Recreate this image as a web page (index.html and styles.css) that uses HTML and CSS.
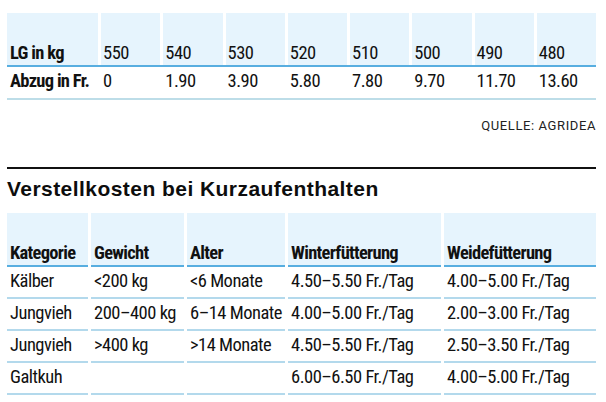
FILE: index.html
```html
<!DOCTYPE html>
<html lang="de">
<head>
<meta charset="utf-8">
<title>Verstellkosten</title>
<link rel="stylesheet" href="styles.css">
</head>
<body>
<main class="page">
  <section class="block">
    <div class="t1">
      <div class="t1-row t1-head">
        <div class="cell label">LG in kg</div>
        <div class="cell">550</div>
        <div class="cell">540</div>
        <div class="cell">530</div>
        <div class="cell">520</div>
        <div class="cell">510</div>
        <div class="cell">500</div>
        <div class="cell">490</div>
        <div class="cell">480</div>
      </div>
      <div class="t1-row t1-body">
        <div class="cell label">Abzug in Fr.</div>
        <div class="cell">0</div>
        <div class="cell">1.90</div>
        <div class="cell">3.90</div>
        <div class="cell">5.80</div>
        <div class="cell">7.80</div>
        <div class="cell">9.70</div>
        <div class="cell">11.70</div>
        <div class="cell">13.60</div>
      </div>
    </div>
    <p class="source">QUELLE: AGRIDEA</p>
  </section>

  <section class="block second">
    <h2 class="title">Verstellkosten bei Kurzaufenthalten</h2>
    <div class="t2">
      <div class="t2-row t2-head">
        <div class="cell">Kategorie</div>
        <div class="cell">Gewicht</div>
        <div class="cell">Alter</div>
        <div class="cell">Winterfütterung</div>
        <div class="cell">Weidefütterung</div>
      </div>
      <div class="t2-row t2-body">
        <div class="cell">Kälber</div>
        <div class="cell">&lt;200 kg</div>
        <div class="cell">&lt;6 Monate</div>
        <div class="cell">4.50–5.50 Fr./Tag</div>
        <div class="cell">4.00–5.00 Fr./Tag</div>
      </div>
      <div class="t2-row t2-body">
        <div class="cell">Jungvieh</div>
        <div class="cell">200–400 kg</div>
        <div class="cell">6–14 Monate</div>
        <div class="cell">4.00–5.00 Fr./Tag</div>
        <div class="cell">2.00–3.00 Fr./Tag</div>
      </div>
      <div class="t2-row t2-body">
        <div class="cell">Jungvieh</div>
        <div class="cell">&gt;400 kg</div>
        <div class="cell">&gt;14 Monate</div>
        <div class="cell">4.50–5.50 Fr./Tag</div>
        <div class="cell">2.50–3.50 Fr./Tag</div>
      </div>
      <div class="t2-row t2-body">
        <div class="cell">Galtkuh</div>
        <div class="cell"></div>
        <div class="cell"></div>
        <div class="cell">6.00–6.50 Fr./Tag</div>
        <div class="cell">4.00–5.00 Fr./Tag</div>
      </div>
    </div>
  </section>
</main>
</body>
</html>
```
FILE: styles.css
```css
*{box-sizing:border-box}
html,body{margin:0;padding:0;background:#fff}
body{
  color:#111;
  font-family:"Roboto Condensed","Roboto",sans-serif;
  font-size:18.5px;
  font-weight:400;
  letter-spacing:-0.5px;
}
.page{
  width:589px;
  margin-left:7px;
  padding-top:13px;
}

/* table 1 */
.t1-row{
  display:grid;
  grid-template-columns:91px repeat(8,1fr);
  column-gap:3px;
}
.t1-head{border-bottom:2px solid #58aee0}
.t1-head .cell{
  height:52px;
  background:#e6f4fd;
  display:flex;
  align-items:flex-end;
  padding:0 2px 2px;
  line-height:20px;
}
.t1-body{border-bottom:2px solid #bddde8}
.t1-body .cell{
  line-height:20px;
  padding:4px 2px 7px;
}
.cell.label{font-weight:700;padding-left:3px;letter-spacing:-0.7px}

.source{
  margin:18px 0 0;
  text-align:right;
  font-family:"Roboto",sans-serif;
  font-size:13px;
  line-height:16px;
  letter-spacing:0.6px;
  color:#222;
}

/* second block */
.second{
  margin-top:33px;
  border-top:2px solid #111;
}
.title{
  margin:7px 0 0;
  font-family:"Liberation Sans",Arial,sans-serif;
  font-weight:700;
  font-size:21px;
  line-height:25px;
  letter-spacing:0.45px;
  color:#0d0d0d;
}
.t2{margin-top:12px}
.t2-row{
  display:grid;
  grid-template-columns:81px 93px 98px 153px 152px;
  column-gap:3px;
}
.t2-head .cell{
  height:54px;
  background:#e6f4fd;
  border-bottom:2px solid #58aee0;
  display:flex;
  align-items:flex-end;
  padding:0 3px 2px;
  line-height:20px;
  font-weight:700;
  letter-spacing:-0.7px;
}
.t2-body .cell{
  line-height:20px;
  padding:4px 3px 6px;
  border-bottom:2px solid #b3d9ec;
  white-space:nowrap;
}
```
